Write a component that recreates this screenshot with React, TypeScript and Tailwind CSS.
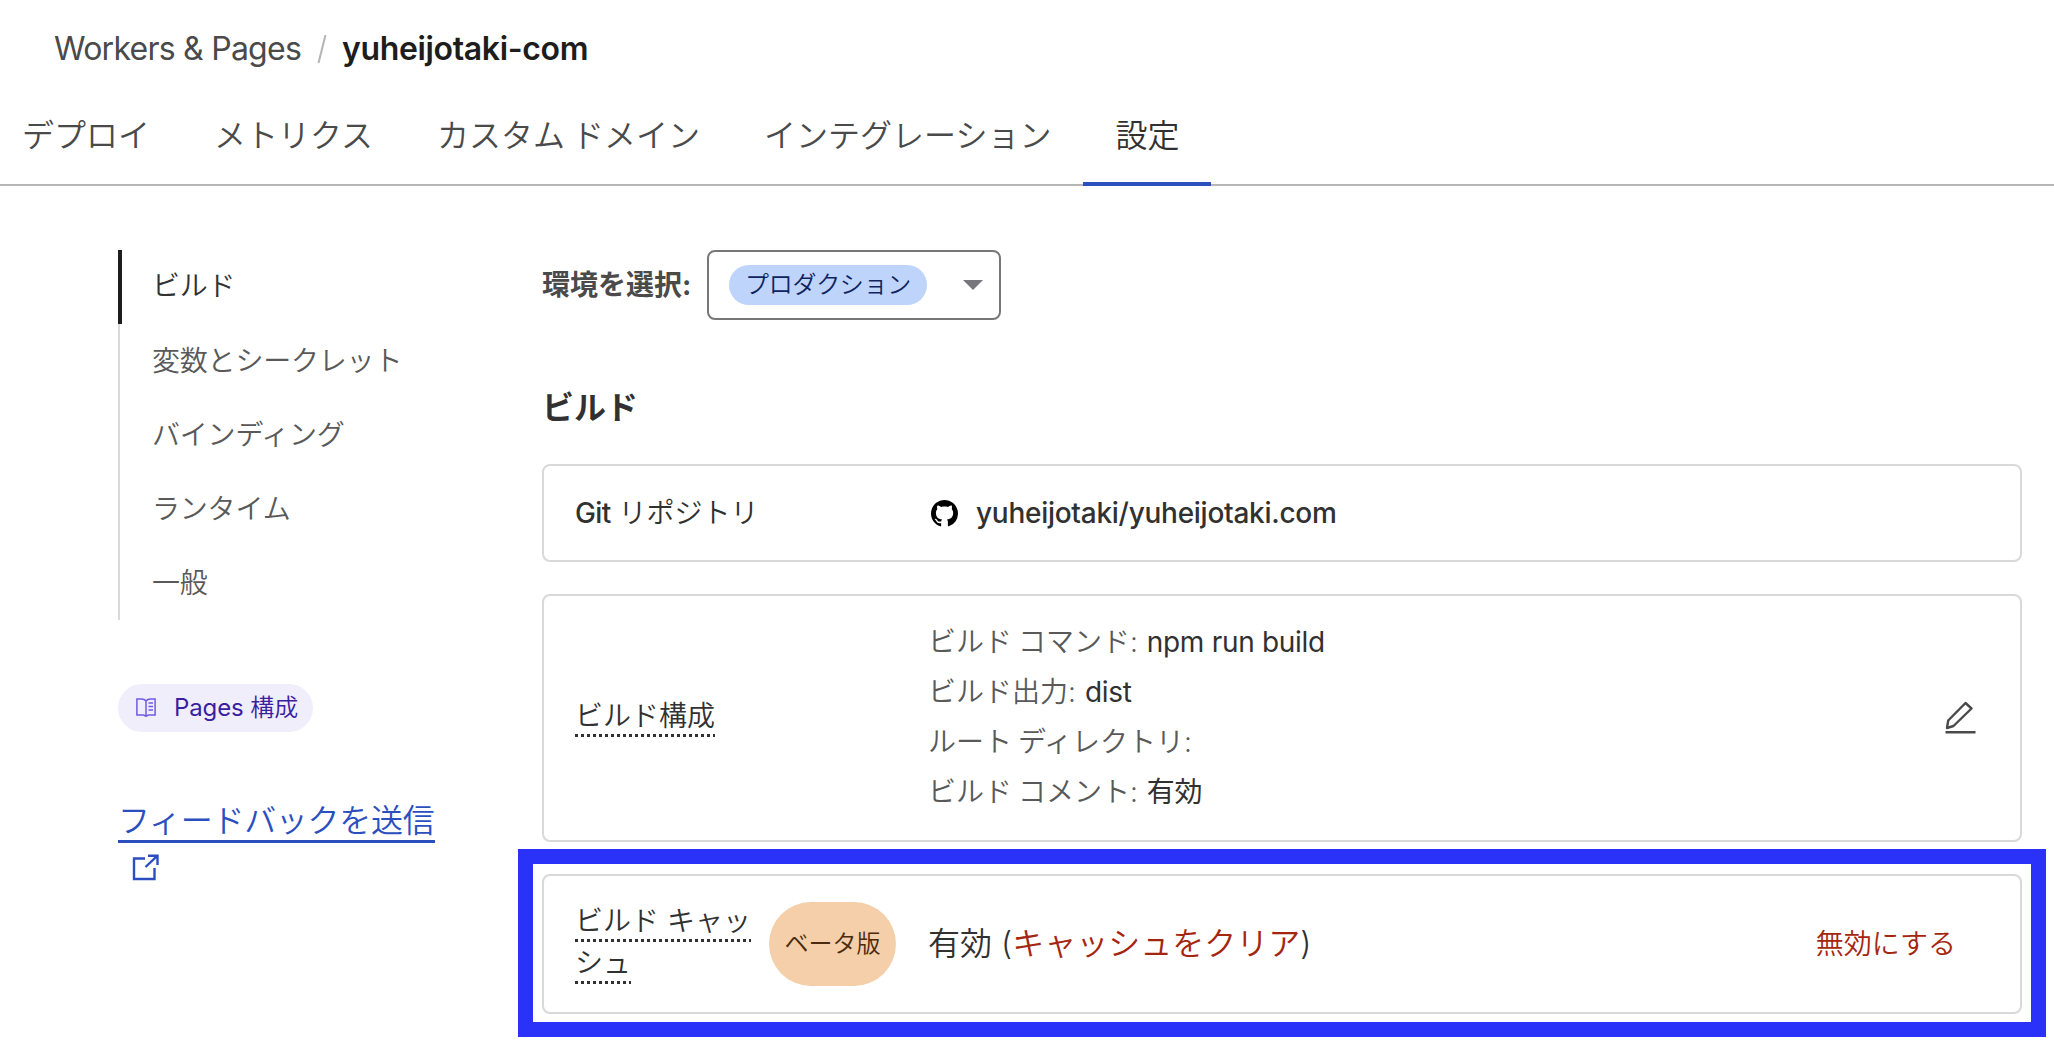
import React from "react";

const TABS = ["デプロイ", "メトリクス", "カスタム ドメイン", "インテグレーション", "設定"];
const SECTIONS = ["ビルド", "変数とシークレット", "バインディング", "ランタイム", "一般"];
const BUILD = [
  { k: "ビルド コマンド:", v: "npm run build" },
  { k: "ビルド出力:", v: "dist" },
  { k: "ルート ディレクトリ:", v: "" },
  { k: "ビルド コメント:", v: "有効" },
];

function DottedLabel({ lines }: { lines: string[] }) {
  return (
    <div className="flex flex-col items-start">
      {lines.map((line) => (
        <span
          key={line}
          className="h-[42px] whitespace-nowrap bg-[linear-gradient(90deg,#313131_50%,transparent_50%)] bg-[length:6px_3px] bg-bottom-left bg-repeat-x leading-[43px]"
        >
          {line}
        </span>
      ))}
    </div>
  );
}

function Card({ className, children }: { className: string; children: React.ReactNode }) {
  return (
    <div className={"flex items-center rounded-lg border-2 border-[#d9d9d9] bg-white pl-[31px] text-[28px] text-[#313131] " + className}>
      {children}
    </div>
  );
}

export default function App() {
  return (
    <div className="h-[1042px] w-[2054px] overflow-hidden bg-white font-['Inter','Noto_Sans_CJK_JP',sans-serif] font-[350]">
      <header className="flex h-[98px] items-center pl-[54px] text-[32px] leading-[40px]">
        <span className="w-[247px] whitespace-nowrap font-normal tracking-[-0.75px] text-[#4a4a4a]">Workers &amp; Pages</span>
        <svg className="ml-4 h-[30px] w-[10px]" viewBox="0 0 10 30" fill="none">
          <path d="M8.5 1L1.5 29" stroke="#b6b6b6" strokeWidth="2" />
        </svg>
        <span className="ml-[15px] whitespace-nowrap font-semibold tracking-[-0.35px] text-[#1d1d1d]">yuheijotaki-com</span>
      </header>

      <nav className="flex h-[88px] border-b-2 border-[#b6b6b6] text-[32px]">
        <div className="-ml-[10px] flex h-[88px]">
          {TABS.map((tab, i) => (
            <div
              key={tab}
              className={
                i === 4
                  ? "h-[88px] whitespace-nowrap border-b-4 border-[#2c4fbf] px-8 leading-[76px] text-[#313131]"
                  : "h-[88px] whitespace-nowrap px-8 leading-[76px] text-[#4a4a4a] [word-spacing:-2px]"
              }
            >
              {tab}
            </div>
          ))}
        </div>
      </nav>

      <div className="flex pt-16">
        <aside className="ml-[118px] w-[424px] shrink-0">
          <ul className="text-[28px] tracking-[-0.2px]">
            {SECTIONS.map((s, i) => (
              <li
                key={s}
                className={
                  i === 0
                    ? "h-[74px] border-l-4 border-[#1d1d1d] pl-[30px] leading-[73px] text-[#313131]"
                    : "h-[74px] border-l-2 border-[#d9d9d9] pl-8 leading-[75px] text-[#595959]"
                }
              >
                {s}
              </li>
            ))}
          </ul>
          <div className="mt-16 flex h-12 w-[195px] items-center rounded-full bg-[#f1eefb] pl-[18px] text-[24px] tracking-[-0.1px] text-[#3a1fa0]">
            <svg className="h-5 w-5" viewBox="0 0 20 20" fill="none" stroke="#6f5be0" strokeWidth="1.5">
              <path d="M10 3C9 1.5 7 1 5.500 1H0.900V17H7.500C8.500 17 9 18.300 10 18.300C11 18.300 11.500 17 12.500 17H19.100V1H14.500C13 1 11 1.500 10 3ZM10 3V18M12.500 5H17M12.500 8.500H17M12.500 12H17" />
            </svg>
            <span className="ml-[18px] whitespace-nowrap leading-[48px]">
              <span className="font-normal">Pages</span> 構成
            </span>
          </div>
          <a className="mt-16 flex h-[47px] w-[317px] items-center whitespace-nowrap border-b-[3px] border-[#2c4fbf] pt-1.5 text-[32px] tracking-[-0.3px] text-[#2c4fbf]">
            フィードバックを送信
          </a>
          <svg className="ml-[14px] mt-[11px] h-[27px] w-[27px]" viewBox="0 0 27 27" fill="none" stroke="#2c4fbf" strokeWidth="2.400">
            <path d="M13 4.500H2V25H22.500V14M16 1.700H25.500V11M25.500 1.700L13.500 13" />
          </svg>
        </aside>

        <main className="w-[1480px] shrink-0">
          <div className="flex h-[70px] items-center">
            <span className="w-[165px] whitespace-nowrap text-[28px] font-bold leading-[66px] text-[#4a4a4a]">環境を選択:</span>
            <div className="flex h-[70px] w-[294px] items-center rounded-lg border-2 border-[#777] pl-5">
              <span className="h-10 w-[198px] whitespace-nowrap rounded-full bg-[#bfd4fb] text-center text-[24px] leading-[39px] tracking-[-0.3px] text-[#0e2461]">
                プロダクション
              </span>
              <svg className="ml-[36px] h-[10px] w-[20px]" viewBox="0 0 20 10">
                <path d="M0 0H20L10 10Z" fill="#76767b" />
              </svg>
            </div>
          </div>
          <h2 className="mt-[56px] h-[88px] text-[32px] font-bold leading-[64px] text-[#313131]">ビルド</h2>

          <Card className="h-[98px]">
            <div className="w-[353px] whitespace-nowrap">
              <span className="font-medium tracking-[-0.6px]">Git</span> リポジトリ
            </div>
            <svg className="ml-[3px] h-[27px] w-[27px]" viewBox="0 0 16 16" fill="#000">
              <path d="M8 0C3.580 0 0 3.580 0 8c0 3.540 2.290 6.530 5.470 7.590.400.070.550-.170.550-.380 0-.190-.010-.820-.010-1.490-2.010.370-2.530-.490-2.690-.940-.090-.230-.480-.940-.820-1.130-.280-.150-.680-.520-.010-.530.630-.010 1.080.580 1.230.820.720 1.210 1.870.870 2.330.660.070-.520.280-.870.510-1.070-1.780-.200-3.640-.890-3.640-3.950 0-.870.310-1.590.820-2.150-.080-.200-.360-1.020.080-2.120 0 0 .670-.210 2.200.820.640-.180 1.320-.270 2-.270s1.360.090 2 .270c1.530-1.040 2.200-.820 2.200-.820.440 1.100.160 1.920.080 2.120.510.560.820 1.270.820 2.150 0 3.070-1.870 3.750-3.650 3.950.290.250.540.730.540 1.480 0 1.070-.010 1.930-.010 2.200 0 .210.150.460.550.380A8.010 8.010 0 0 0 16 8c0-4.420-3.580-8-8-8z" />
            </svg>
            <span className="ml-[18px] whitespace-nowrap font-medium tracking-[-0.27px]">yuheijotaki/yuheijotaki.com</span>
          </Card>

          <Card className="mt-8 h-[248px]">
            <div className="w-[353px] pb-[4px]">
              <DottedLabel lines={["ビルド構成"]} />
            </div>
            <dl className="flex-1 pb-[2px]">
              {BUILD.map((row) => (
                <div key={row.k} className="flex h-[50px] gap-[9px] whitespace-nowrap leading-[50px]">
                  <dt className="text-[#595959] [word-spacing:-2px]">{row.k}</dt>
                  <dd className="font-normal tracking-[-0.3px]">{row.v}</dd>
                </div>
              ))}
            </dl>
            <svg className="mr-[44px] h-[34px] w-[31px]" viewBox="0 0 31 34" fill="none" stroke="#4a4a4a" strokeWidth="2.400" strokeLinejoin="round">
              <path d="M20.500 2L26.500 7.500L8.500 25L2 27L3.200 19.500ZM0.500 31.300H30.500" />
            </svg>
          </Card>

          <div className="relative mt-8">
            <Card className="h-[140px]">
              <div className="w-[194px] pb-[4px]">
                <DottedLabel lines={["ビルド キャッ", "シュ"]} />
              </div>
              <span className="flex h-[84px] w-[127px] items-center justify-center whitespace-nowrap rounded-[42px] bg-[#f4cfa9] text-[24px] text-[#4a2b10]">
                ベータ版
              </span>
              <div className="ml-8 flex-1 whitespace-nowrap text-[32px]">
                有効 (<span className="text-[#a4260f]">キャッシュをクリア</span>)
              </div>
              <button className="mr-[64px] whitespace-nowrap text-[#a4260f]">無効にする</button>
            </Card>
            <div className="absolute -left-6 -top-[25px] h-[188px] w-[1528px] border-[15px] border-[#2a32fa]" />
          </div>
        </main>
      </div>
    </div>
  );
}
